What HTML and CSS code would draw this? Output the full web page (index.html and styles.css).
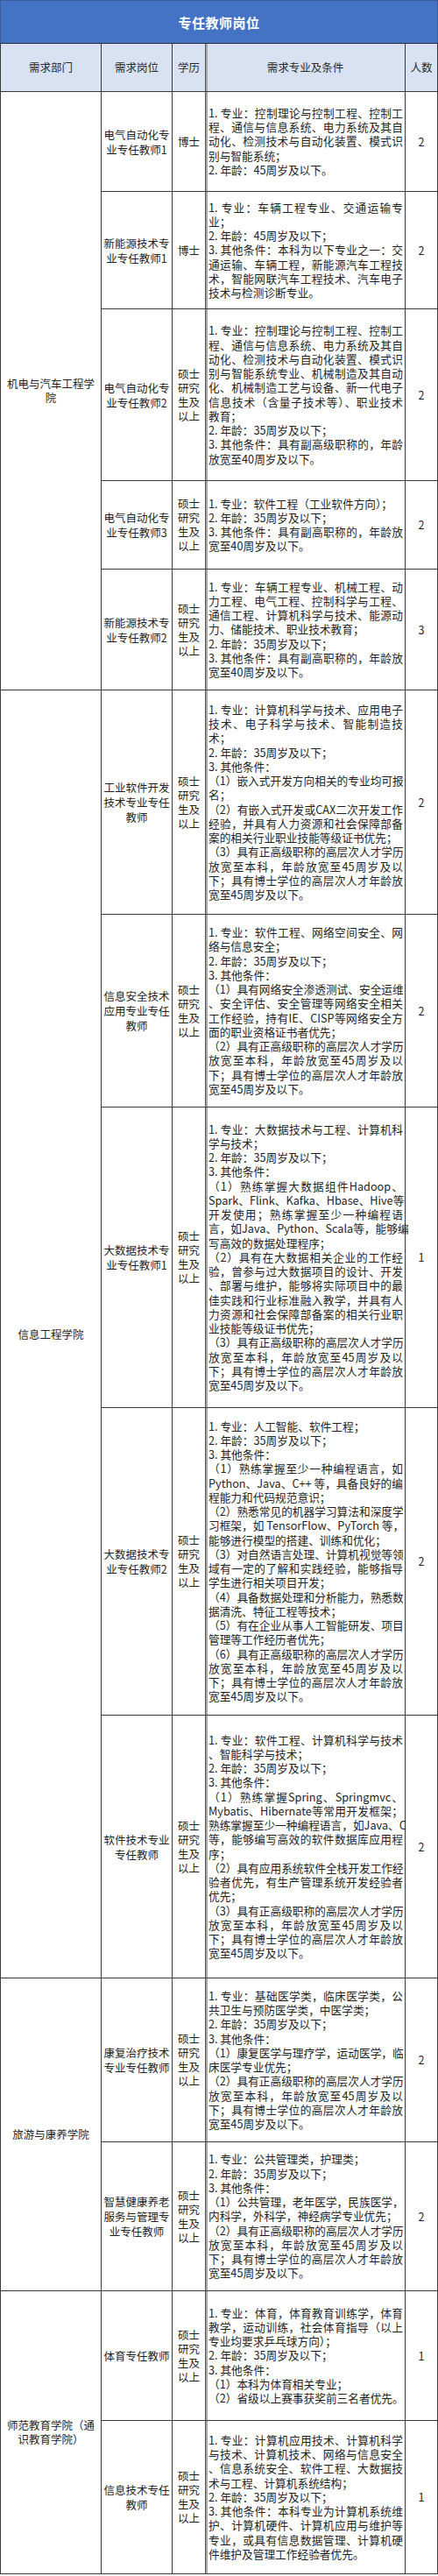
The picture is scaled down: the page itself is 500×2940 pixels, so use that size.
FILE: index.html
```html
<!DOCTYPE html>
<html lang="zh-CN">
<head>
<meta charset="utf-8">
<title>专任教师岗位</title>
<link rel="stylesheet" href="styles.css">
</head>
<body>
<div class="sheet">
  <div class="title">专任教师岗位</div>

  <div class="cell hd c1">需求部门</div>
  <div class="cell hd c2">需求岗位</div>
  <div class="cell hd c3">学历</div>
  <div class="cell hd c4">需求专业及条件</div>
  <div class="cell hd c5">人数</div>

  <!-- 机电与汽车工程学院 -->
  <div class="cell c1 dept span5">机电与汽车工程学<br>院</div>

  <div class="cell c2 pos">电气自动化专<br>业专任教师1</div>
  <div class="cell c3 edu">博士</div>
  <div class="cell c4 req">
    <div class="j">1. 专业：控制理论与控制工程、控制工</div>
    <div class="j">程、通信与信息系统、电力系统及其自</div>
    <div class="j">动化、检测技术与自动化装置、模式识</div>
    <div class="l">别与智能系统；</div>
    <div class="l">2. 年龄：45周岁及以下。</div>
  </div>
  <div class="cell c5 num">2</div>

  <div class="cell c2 pos">新能源技术专<br>业专任教师1</div>
  <div class="cell c3 edu">博士</div>
  <div class="cell c4 req">
    <div class="j">1. 专业：车辆工程专业、交通运输专</div>
    <div class="l">业；</div>
    <div class="l">2. 年龄：45周岁及以下；</div>
    <div class="j">3. 其他条件：本科为以下专业之一：交</div>
    <div class="j">通运输、车辆工程，新能源汽车工程技</div>
    <div class="j">术，智能网联汽车工程技术、汽车电子</div>
    <div class="l">技术与检测诊断专业。</div>
  </div>
  <div class="cell c5 num">2</div>

  <div class="cell c2 pos">电气自动化专<br>业专任教师2</div>
  <div class="cell c3 edu">硕士<br>研究<br>生及<br>以上</div>
  <div class="cell c4 req">
    <div class="j">1. 专业：控制理论与控制工程、控制工</div>
    <div class="j">程、通信与信息系统、电力系统及其自</div>
    <div class="j">动化、检测技术与自动化装置、模式识</div>
    <div class="j">别与智能系统专业、机械制造及其自动</div>
    <div class="j">化、机械制造工艺与设备、新一代电子</div>
    <div class="j">信息技术（含量子技术等）、职业技术</div>
    <div class="l">教育；</div>
    <div class="l">2. 年龄：35周岁及以下；</div>
    <div class="j">3. 其他条件：具有副高级职称的，年龄</div>
    <div class="l">放宽至40周岁及以下。</div>
  </div>
  <div class="cell c5 num">2</div>

  <div class="cell c2 pos">电气自动化专<br>业专任教师3</div>
  <div class="cell c3 edu">硕士<br>研究<br>生及<br>以上</div>
  <div class="cell c4 req">
    <div class="l">1. 专业：软件工程（工业软件方向）；</div>
    <div class="l">2. 年龄：35周岁及以下；</div>
    <div class="j">3. 其他条件：具有副高职称的，年龄放</div>
    <div class="l">宽至40周岁及以下。</div>
  </div>
  <div class="cell c5 num">2</div>

  <div class="cell c2 pos">新能源技术专<br>业专任教师2</div>
  <div class="cell c3 edu">硕士<br>研究<br>生及<br>以上</div>
  <div class="cell c4 req">
    <div class="j">1. 专业：车辆工程专业、机械工程、动</div>
    <div class="j">力工程、电气工程、控制科学与工程、</div>
    <div class="j">通信工程、计算机科学与技术、能源动</div>
    <div class="l">力、储能技术、职业技术教育；</div>
    <div class="l">2. 年龄：35周岁及以下；</div>
    <div class="j">3. 其他条件：具有副高职称的，年龄放</div>
    <div class="l">宽至40周岁及以下。</div>
  </div>
  <div class="cell c5 num">3</div>

  <!-- 信息工程学院 -->
  <div class="cell c1 dept span5">信息工程学院</div>

  <div class="cell c2 pos">工业软件开发<br>技术专业专任<br>教师</div>
  <div class="cell c3 edu">硕士<br>研究<br>生及<br>以上</div>
  <div class="cell c4 req">
    <div class="j">1. 专业：计算机科学与技术、应用电子</div>
    <div class="j">技术、电子科学与技术、智能制造技</div>
    <div class="l">术；</div>
    <div class="l">2. 年龄：35周岁及以下；</div>
    <div class="l">3. 其他条件：</div>
    <div class="j">（1）嵌入式开发方向相关的专业均可报</div>
    <div class="l">名；</div>
    <div class="j">（2）有嵌入式开发或CAX二次开发工作</div>
    <div class="j">经验，并具有人力资源和社会保障部备</div>
    <div class="l">案的相关行业职业技能等级证书优先；</div>
    <div class="j">（3）具有正高级职称的高层次人才学历</div>
    <div class="j">放宽至本科，年龄放宽至45周岁及以</div>
    <div class="j">下；具有博士学位的高层次人才年龄放</div>
    <div class="l">宽至45周岁及以下。</div>
  </div>
  <div class="cell c5 num">2</div>

  <div class="cell c2 pos">信息安全技术<br>应用专业专任<br>教师</div>
  <div class="cell c3 edu">硕士<br>研究<br>生及<br>以上</div>
  <div class="cell c4 req">
    <div class="j">1. 专业：软件工程、网络空间安全、网</div>
    <div class="l">络与信息安全；</div>
    <div class="l">2. 年龄：35周岁及以下；</div>
    <div class="l">3. 其他条件：</div>
    <div class="j">（1）具有网络安全渗透测试、安全运维</div>
    <div class="j">、安全评估、安全管理等网络安全相关</div>
    <div class="j">工作经验，持有IE、CISP等网络安全方</div>
    <div class="l">面的职业资格证书者优先；</div>
    <div class="j">（2）具有正高级职称的高层次人才学历</div>
    <div class="j">放宽至本科，年龄放宽至45周岁及以</div>
    <div class="j">下；具有博士学位的高层次人才年龄放</div>
    <div class="l">宽至45周岁及以下。</div>
  </div>
  <div class="cell c5 num">2</div>

  <div class="cell c2 pos">大数据技术专<br>业专任教师1</div>
  <div class="cell c3 edu">硕士<br>研究<br>生及<br>以上</div>
  <div class="cell c4 req">
    <div class="j">1. 专业：大数据技术与工程、计算机科</div>
    <div class="l">学与技术；</div>
    <div class="l">2. 年龄：35周岁及以下；</div>
    <div class="l">3. 其他条件：</div>
    <div class="j">（1）熟练掌握大数据组件Hadoop、</div>
    <div class="j">Spark、Flink、Kafka、Hbase、Hive等</div>
    <div class="j">开发使用；熟练掌握至少一种编程语</div>
    <div class="j">言，如Java、Python、Scala等，能够编</div>
    <div class="l">写高效的数据处理程序；</div>
    <div class="j">（2）具有在大数据相关企业的工作经</div>
    <div class="j">验，曾参与过大数据项目的设计、开发</div>
    <div class="j">、部署与维护，能够将实际项目中的最</div>
    <div class="j">佳实践和行业标准融入教学，并具有人</div>
    <div class="j">力资源和社会保障部备案的相关行业职</div>
    <div class="l">业技能等级证书优先；</div>
    <div class="j">（3）具有正高级职称的高层次人才学历</div>
    <div class="j">放宽至本科，年龄放宽至45周岁及以</div>
    <div class="j">下；具有博士学位的高层次人才年龄放</div>
    <div class="l">宽至45周岁及以下。</div>
  </div>
  <div class="cell c5 num">1</div>

  <div class="cell c2 pos">大数据技术专<br>业专任教师2</div>
  <div class="cell c3 edu">硕士<br>研究<br>生及<br>以上</div>
  <div class="cell c4 req">
    <div class="l">1. 专业：人工智能、软件工程；</div>
    <div class="l">2. 年龄：35周岁及以下；</div>
    <div class="l">3. 其他条件：</div>
    <div class="j">（1）熟练掌握至少一种编程语言，如</div>
    <div class="j">Python、Java、C++ 等，具备良好的编</div>
    <div class="l">程能力和代码规范意识；</div>
    <div class="j">（2）熟悉常见的机器学习算法和深度学</div>
    <div class="j">习框架，如 TensorFlow、PyTorch 等，</div>
    <div class="l">能够进行模型的搭建、训练和优化；</div>
    <div class="j">（3）对自然语言处理、计算机视觉等领</div>
    <div class="j">域有一定的了解和实践经验，能够指导</div>
    <div class="l">学生进行相关项目开发；</div>
    <div class="j">（4）具备数据处理和分析能力，熟悉数</div>
    <div class="l">据清洗、特征工程等技术；</div>
    <div class="j">（5）有在企业从事人工智能研发、项目</div>
    <div class="l">管理等工作经历者优先；</div>
    <div class="j">（6）具有正高级职称的高层次人才学历</div>
    <div class="j">放宽至本科，年龄放宽至45周岁及以</div>
    <div class="j">下；具有博士学位的高层次人才年龄放</div>
    <div class="l">宽至45周岁及以下。</div>
  </div>
  <div class="cell c5 num">2</div>

  <div class="cell c2 pos">软件技术专业<br>专任教师</div>
  <div class="cell c3 edu">硕士<br>研究<br>生及<br>以上</div>
  <div class="cell c4 req">
    <div class="j">1. 专业：软件工程、计算机科学与技术</div>
    <div class="l">、智能科学与技术；</div>
    <div class="l">2. 年龄：35周岁及以下；</div>
    <div class="l">3. 其他条件：</div>
    <div class="j">（1）熟练掌握Spring、Springmvc、</div>
    <div class="j">Mybatis、Hibernate等常用开发框架；</div>
    <div class="j">熟练掌握至少一种编程语言，如Java、C</div>
    <div class="j">等，能够编写高效的软件数据库应用程</div>
    <div class="l">序；</div>
    <div class="j">（2）具有应用系统软件全栈开发工作经</div>
    <div class="j">验者优先，有生产管理系统开发经验者</div>
    <div class="l">优先；</div>
    <div class="j">（3）具有正高级职称的高层次人才学历</div>
    <div class="j">放宽至本科，年龄放宽至45周岁及以</div>
    <div class="j">下；具有博士学位的高层次人才年龄放</div>
    <div class="l">宽至45周岁及以下。</div>
  </div>
  <div class="cell c5 num">2</div>

  <!-- 旅游与康养学院 -->
  <div class="cell c1 dept span2">旅游与康养学院</div>

  <div class="cell c2 pos">康复治疗技术<br>专业专任教师</div>
  <div class="cell c3 edu">硕士<br>研究<br>生及<br>以上</div>
  <div class="cell c4 req">
    <div class="j">1. 专业：基础医学类，临床医学类，公</div>
    <div class="l">共卫生与预防医学类，中医学类；</div>
    <div class="l">2. 年龄：35周岁及以下；</div>
    <div class="l">3. 其他条件：</div>
    <div class="j">（1）康复医学与理疗学，运动医学，临</div>
    <div class="l">床医学专业优先；</div>
    <div class="j">（2）具有正高级职称的高层次人才学历</div>
    <div class="j">放宽至本科，年龄放宽至45周岁及以</div>
    <div class="j">下；具有博士学位的高层次人才年龄放</div>
    <div class="l">宽至45周岁及以下。</div>
  </div>
  <div class="cell c5 num">2</div>

  <div class="cell c2 pos">智慧健康养老<br>服务与管理专<br>业专任教师</div>
  <div class="cell c3 edu">硕士<br>研究<br>生及<br>以上</div>
  <div class="cell c4 req">
    <div class="l">1. 专业：公共管理类，护理类；</div>
    <div class="l">2. 年龄：35周岁及以下；</div>
    <div class="l">3. 其他条件：</div>
    <div class="j">（1）公共管理，老年医学，民族医学，</div>
    <div class="l">内科学，外科学，神经病学专业优先；</div>
    <div class="j">（2）具有正高级职称的高层次人才学历</div>
    <div class="j">放宽至本科，年龄放宽至45周岁及以</div>
    <div class="j">下；具有博士学位的高层次人才年龄放</div>
    <div class="l">宽至45周岁及以下。</div>
  </div>
  <div class="cell c5 num">2</div>

  <!-- 师范教育学院 -->
  <div class="cell c1 dept span2">师范教育学院（通<br>识教育学院）</div>

  <div class="cell c2 pos">体育专任教师</div>
  <div class="cell c3 edu">硕士<br>研究<br>生及<br>以上</div>
  <div class="cell c4 req">
    <div class="j">1. 专业：体育，体育教育训练学，体育</div>
    <div class="j">教学，运动训练，社会体育指导（以上</div>
    <div class="l">专业均要求乒乓球方向）；</div>
    <div class="l">2. 年龄：35周岁及以下；</div>
    <div class="l">3. 其他条件：</div>
    <div class="l">（1）本科为体育相关专业；</div>
    <div class="l">（2）省级以上赛事获奖前三名者优先。</div>
  </div>
  <div class="cell c5 num">1</div>

  <div class="cell c2 pos">信息技术专任<br>教师</div>
  <div class="cell c3 edu">硕士<br>研究<br>生及<br>以上</div>
  <div class="cell c4 req">
    <div class="j">1. 专业：计算机应用技术、计算机科学</div>
    <div class="j">与技术、计算机技术、网络与信息安全</div>
    <div class="j">、信息系统安全、软件工程、大数据技</div>
    <div class="l">术与工程、计算机系统结构；</div>
    <div class="l">2. 年龄：35周岁及以下；</div>
    <div class="j">3. 其他条件：本科专业为计算机系统维</div>
    <div class="j">护、计算机硬件、计算机应用与维护等</div>
    <div class="j">专业，或具有信息数据管理、计算机硬</div>
    <div class="l">件维护及管理工作经验者优先。</div>
  </div>
  <div class="cell c5 num">1</div>
</div>
</body>
</html>
```

FILE: styles.css
```css
html, body {
  margin: 0;
  padding: 0;
  background: #ffffff;
}

body {
  font-family: "Noto Sans CJK SC", "Noto Sans", sans-serif;
  color: #1e1e1e;
}

.sheet {
  display: grid;
  width: 500px;
  grid-template-columns: 116px 81px 38px 228px 37px;
  grid-template-rows:
    50px 55px
    114px 134px 196px 101px 138px
    256px 220px 343px 351px 300px
    187px 170px 148px 175px;
}

.title {
  grid-column: 1 / -1;
  box-sizing: border-box;
  background: #4472c4;
  color: #ffffff;
  font-size: 15px;
  font-weight: 700;
  letter-spacing: 0.5px;
  display: flex;
  align-items: center;
  justify-content: center;
  border: 1px solid #3a5a9a;
  border-bottom: 1px solid #2f2f2f;
}

.cell {
  box-sizing: border-box;
  border-right: 1px solid #3a3a3a;
  border-bottom: 1px solid #3a3a3a;
  display: flex;
  align-items: center;
  justify-content: center;
  text-align: center;
  font-size: 12.5px;
  line-height: 16px;
  white-space: nowrap;
}

.c1 { grid-column: 1; border-left: 1px solid #3a3a3a; }
.c2 { grid-column: 2; }
.c3 { grid-column: 3; border-right: 1px solid #555555; }
.c4 { grid-column: 4; box-shadow: inset 2px 0 0 #a8a8a8; }
.c5 { grid-column: 5; }

.span5 { grid-row: span 5; }
.span2 { grid-row: span 2; }

.hd {
  background: #d9e2f3;
  color: #2a2a2a;
  font-size: 12.5px;
}

.pos {
  line-height: 17px;
}

.edu {
  line-height: 16px;
}

.num {
  font-size: 12.5px;
}

.req {
  flex-direction: column;
  align-items: stretch;
  justify-content: center;
  text-align: left;
  padding: 0 2px 0 3px;
  font-size: 12.7px;
  line-height: 16.25px;
}

.req .j {
  text-align: justify;
  text-align-last: justify;
}

.req .l {
  text-align: left;
}
```
